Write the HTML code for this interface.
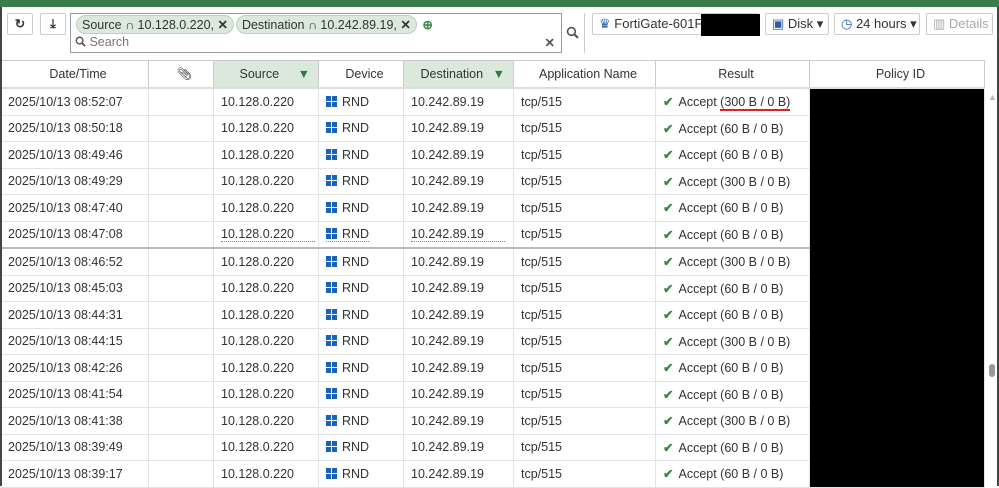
<!DOCTYPE html><html><head><style>
body{margin:0;width:999px;height:486px;overflow:hidden;background:#fff;font-family:"Liberation Sans",sans-serif;font-size:12.5px;color:#333;position:relative}
.a{position:absolute}
.btn{position:absolute;border:1px solid #ccc;background:#fff;border-radius:2px;box-sizing:border-box}
.tag{display:inline-block;background:#dbe8dc;border:1px solid #bcd2be;border-radius:10px;padding:1px 5px;font-size:12.5px;margin-right:2px}
table{position:absolute;left:0;top:60px;border-collapse:collapse;table-layout:fixed}
td,th{border:1px solid #e4e4e4;height:25.5px;padding:0 0 0 7px;white-space:nowrap;overflow:hidden;font-weight:normal;text-align:left}
th{height:26px;text-align:center;border-color:#ccc;border-bottom:2px solid #ddd;background:#fff}
th.f{background:#dbe8dc}
.win{display:inline-block;width:11px;height:11px;vertical-align:-1px;margin-right:5px;background:linear-gradient(#fff,#fff) 5px 0/1px 11px no-repeat,linear-gradient(#fff,#fff) 0 5px/11px 1px no-repeat,#1a62b8}
.ck{color:#3a8a45;font-weight:bold;margin-right:5px}
.u td{border-bottom:2px solid #bbb}
.d{border-bottom:1px dotted #888}
</style></head><body>
<div class="a" style="left:0;top:0;width:999px;height:7px;background:#3e7b4b"></div>
<div class="btn" style="left:7px;top:13px;width:26px;height:22px;text-align:center;line-height:20px;font-weight:bold">&#x21bb;</div>
<div class="btn" style="left:40px;top:13px;width:26px;height:22px;text-align:center;line-height:20px;font-weight:bold">&#x2913;</div>
<div class="a" style="left:70px;top:13px;width:492px;height:40px;border:1px solid #999;box-sizing:border-box;background:#fff">
<div style="padding:1px 0 0 5px"><span class="tag">Source ∩ 10.128.0.220, <b>✕</b></span><span class="tag">Destination ∩ 10.242.89.19, <b>✕</b></span> <span style="color:#3a8a45;font-weight:bold">⊕</span></div>
<div style="padding:1px 0 0 4px;color:#777"><svg width="11" height="11" viewBox="0 0 12 12" style="vertical-align:-1px"><circle cx="5" cy="5" r="3.6" fill="none" stroke="#555" stroke-width="1.6"/><path d="M7.6 7.6 11 11" stroke="#555" stroke-width="2"/></svg> Search<span style="position:absolute;right:6px;color:#555;font-weight:bold">✕</span></div></div>
<svg class="a" style="left:566px;top:26px" width="13" height="13" viewBox="0 0 12 12"><circle cx="5" cy="5" r="3.6" fill="none" stroke="#555" stroke-width="1.5"/><path d="M7.6 7.6 11 11" stroke="#555" stroke-width="2"/></svg>
<div class="btn" style="left:584px;top:13px;width:1px;height:40px;border-left:none"></div>
<div class="btn" style="left:592px;top:13px;width:167px;height:22px;padding:2px 0 0 6px;font-size:13px"><span style="color:#2a5ea8">♛</span> FortiGate-601F<div class="a" style="left:108px;top:0;width:59px;height:22px;background:#000"></div></div>
<div class="btn" style="left:765px;top:13px;width:64px;height:22px;padding:2px 0 0 6px;font-size:13px"><span style="color:#2a5ea8">▣</span> Disk ▾</div>
<div class="btn" style="left:834px;top:13px;width:86px;height:22px;padding:2px 0 0 6px;font-size:13px"><span style="color:#2a5ea8">◷</span> 24 hours ▾</div>
<div class="btn" style="left:926px;top:13px;width:67px;height:22px;padding:2px 0 0 6px;font-size:13px;color:#aaa">▥ Details</div>
<table>
<colgroup><col style="width:148px"><col style="width:65px"><col style="width:105px"><col style="width:85px"><col style="width:110px"><col style="width:142px"><col style="width:154px"><col style="width:175px"><col style="width:14px"></colgroup>
<tr><th>Date/Time</th><th>&#x1F4CE;&#xFE0E;</th><th class="f">Source <span style="color:#2f7a3e;float:right;margin-right:8px">▼</span></th><th>Device</th><th class="f">Destination <span style="color:#2f7a3e;float:right;margin-right:8px">▼</span></th><th>Application Name</th><th>Result</th><th>Policy ID</th><th style="border:none"></th></tr>
<tr><td>2025/10/13 08:52:07</td><td></td><td>10.128.0.220</td><td><i class="win"></i>RND</td><td>10.242.89.19</td><td>tcp/515</td><td><span class="ck">✔</span>Accept <span style="border-bottom:2px solid #e0202a">(300 B / 0 B)</span></td><td rowspan="15" style="background:#000;vertical-align:top"></td><td rowspan="15" style="border:none;border-left:1px solid #ddd;vertical-align:top;color:#bbb;font-size:9px;padding:4px 0 0 3px">▲</td></tr>
<tr><td>2025/10/13 08:50:18</td><td></td><td>10.128.0.220</td><td><i class="win"></i>RND</td><td>10.242.89.19</td><td>tcp/515</td><td><span class="ck">✔</span>Accept (60 B / 0 B)</td></tr>
<tr><td>2025/10/13 08:49:46</td><td></td><td>10.128.0.220</td><td><i class="win"></i>RND</td><td>10.242.89.19</td><td>tcp/515</td><td><span class="ck">✔</span>Accept (60 B / 0 B)</td></tr>
<tr><td>2025/10/13 08:49:29</td><td></td><td>10.128.0.220</td><td><i class="win"></i>RND</td><td>10.242.89.19</td><td>tcp/515</td><td><span class="ck">✔</span>Accept (300 B / 0 B)</td></tr>
<tr><td>2025/10/13 08:47:40</td><td></td><td>10.128.0.220</td><td><i class="win"></i>RND</td><td>10.242.89.19</td><td>tcp/515</td><td><span class="ck">✔</span>Accept (60 B / 0 B)</td></tr>
<tr class="u"><td>2025/10/13 08:47:08</td><td></td><td><span class="d">10.128.0.220&nbsp;&nbsp;&nbsp;&nbsp;&nbsp;&nbsp;</span></td><td><span class="d"><i class="win"></i>RND</span></td><td><span class="d">10.242.89.19&nbsp;&nbsp;&nbsp;&nbsp;&nbsp;&nbsp;</span></td><td>tcp/515</td><td><span class="ck">✔</span>Accept (60 B / 0 B)</td></tr>
<tr><td>2025/10/13 08:46:52</td><td></td><td>10.128.0.220</td><td><i class="win"></i>RND</td><td>10.242.89.19</td><td>tcp/515</td><td><span class="ck">✔</span>Accept (300 B / 0 B)</td></tr>
<tr><td>2025/10/13 08:45:03</td><td></td><td>10.128.0.220</td><td><i class="win"></i>RND</td><td>10.242.89.19</td><td>tcp/515</td><td><span class="ck">✔</span>Accept (60 B / 0 B)</td></tr>
<tr><td>2025/10/13 08:44:31</td><td></td><td>10.128.0.220</td><td><i class="win"></i>RND</td><td>10.242.89.19</td><td>tcp/515</td><td><span class="ck">✔</span>Accept (60 B / 0 B)</td></tr>
<tr><td>2025/10/13 08:44:15</td><td></td><td>10.128.0.220</td><td><i class="win"></i>RND</td><td>10.242.89.19</td><td>tcp/515</td><td><span class="ck">✔</span>Accept (300 B / 0 B)</td></tr>
<tr><td>2025/10/13 08:42:26</td><td></td><td>10.128.0.220</td><td><i class="win"></i>RND</td><td>10.242.89.19</td><td>tcp/515</td><td><span class="ck">✔</span>Accept (60 B / 0 B)</td></tr>
<tr><td>2025/10/13 08:41:54</td><td></td><td>10.128.0.220</td><td><i class="win"></i>RND</td><td>10.242.89.19</td><td>tcp/515</td><td><span class="ck">✔</span>Accept (60 B / 0 B)</td></tr>
<tr><td>2025/10/13 08:41:38</td><td></td><td>10.128.0.220</td><td><i class="win"></i>RND</td><td>10.242.89.19</td><td>tcp/515</td><td><span class="ck">✔</span>Accept (300 B / 0 B)</td></tr>
<tr><td>2025/10/13 08:39:49</td><td></td><td>10.128.0.220</td><td><i class="win"></i>RND</td><td>10.242.89.19</td><td>tcp/515</td><td><span class="ck">✔</span>Accept (60 B / 0 B)</td></tr>
<tr><td>2025/10/13 08:39:17</td><td></td><td>10.128.0.220</td><td><i class="win"></i>RND</td><td>10.242.89.19</td><td>tcp/515</td><td><span class="ck">✔</span>Accept (60 B / 0 B)</td></tr>
</table>
<div class="a" style="left:989px;top:364px;width:6px;height:13px;background:#999;border-radius:3px"></div>
<div class="a" style="left:997px;top:7px;width:2px;height:479px;background:#444"></div>
<div class="a" style="left:0;top:7px;width:2px;height:479px;background:#444"></div>
</body></html>
